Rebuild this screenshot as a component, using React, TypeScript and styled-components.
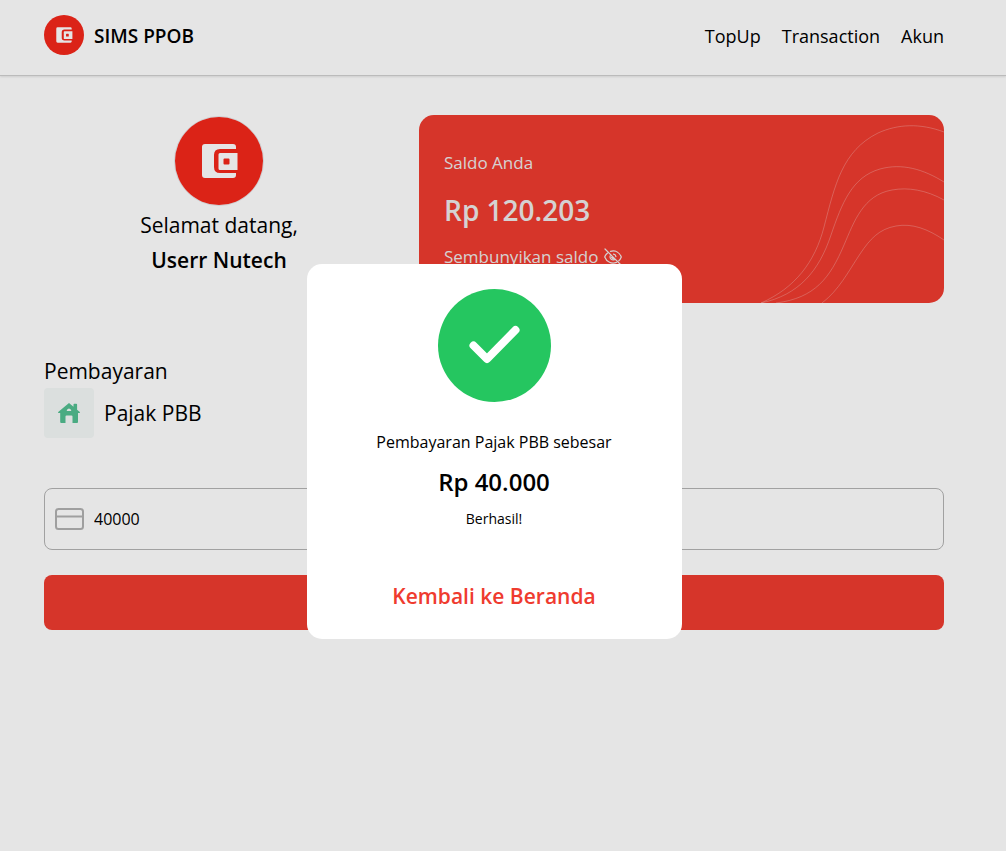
import React from "react";
import styled, { createGlobalStyle } from "styled-components";

const red = "#ef3b2f";

const GlobalStyle = createGlobalStyle`
  *, *::before, *::after { box-sizing: border-box; }
  body {
    margin: 0;
    background: #fff;
    color: #000;
    font-family: "Segoe UI", "Open Sans", "Noto Sans", sans-serif;
    font-size: 17px;
    font-weight: 400;
  }
  h1, h2, p { margin: 0; }
  a { color: inherit; text-decoration: none; }
  button, input { font: inherit; }
`;

const Page = styled.div`
  min-height: 100vh;
`;

const Header = styled.header`
  display: flex;
  align-items: center;
  justify-content: space-between;
  padding: 15px 62px 20px 44px;
  border-bottom: 1px solid #d1d1d1;
  box-shadow: 0 1px 2px rgba(0, 0, 0, 0.1);
`;

const Brand = styled.a`
  display: flex;
  align-items: center;
  gap: 10px;
  font-size: 19px;
  font-weight: 600;
`;

const BrandName = styled.span`
  padding-top: 2px;
`;

const Nav = styled.nav`
  display: flex;
  gap: 21px;
  padding-top: 2px;
  font-size: 18px;
`;

const Main = styled.main`
  padding: 39px 62px 40px 44px;
`;

const Summary = styled.section`
  display: grid;
  grid-template-columns: 2fr 3fr;
  gap: 25px;
`;

const Profile = styled.div`
  display: flex;
  flex-direction: column;
  align-items: center;
  padding-top: 1px;
`;

const Avatar = styled.div`
  display: flex;
  border: 1px solid #e5e7eb;
  border-radius: 50%;
`;

const Greeting = styled.p<{ $strong?: boolean }>`
  font-size: 21px;
  line-height: ${(p) => (p.$strong ? 32 : 38)}px;
  font-weight: ${(p) => (p.$strong ? 600 : 400)};
`;

const Balance = styled.div`
  position: relative;
  min-height: 188px;
  padding: 34px 25px 0;
  overflow: hidden;
  border-radius: 15px;
  background: ${red};
  color: #eeeaea;
`;

const Waves = styled.svg`
  position: absolute;
  right: 0;
  bottom: 0;
`;

const BalanceLabel = styled.p`
  line-height: 28px;
`;

const Amount = styled.p`
  padding: 11px 0 13px;
  font-size: 28px;
  line-height: 44px;
  font-weight: 600;
`;

const Toggle = styled.button`
  display: flex;
  align-items: center;
  gap: 6px;
  padding: 0;
  border: 0;
  background: none;
  color: inherit;
  line-height: 24px;
`;

const Payment = styled.form`
  padding-top: 52px;
`;

const SectionTitle = styled.h1`
  font-size: 21px;
  line-height: 33px;
  font-weight: 400;
`;

const Service = styled.div`
  display: flex;
  align-items: center;
  gap: 10px;
  margin-bottom: 50px;
`;

const ServiceIcon = styled.div`
  display: flex;
  align-items: center;
  justify-content: center;
  width: 50px;
  height: 50px;
  border-radius: 4px;
  background: #f4f9f8;
`;

const ServiceName = styled.h2`
  font-size: 21px;
  font-weight: 400;
`;

const Field = styled.label`
  display: flex;
  align-items: center;
  gap: 10px;
  height: 62px;
  margin-bottom: 25px;
  padding: 0 10px;
  border: 1px solid #b4b4b4;
  border-radius: 8px;
`;

const AmountInput = styled.input`
  flex: 1;
  min-width: 0;
  padding: 0;
  border: 0;
  outline: 0;
  background: transparent;
  color: #000;
  font-size: 16px;
`;

const PayButton = styled.button`
  width: 100%;
  height: 55px;
  border: 0;
  border-radius: 8px;
  background: ${red};
  color: #fff;
`;

const Overlay = styled.div`
  position: fixed;
  inset: 0;
  display: flex;
  align-items: center;
  justify-content: center;
  padding: 51px 18px 0 0;
  background: rgba(0, 0, 0, 0.1);
`;

const Dialog = styled.div`
  display: flex;
  flex-direction: column;
  align-items: center;
  width: 375px;
  padding: 25px 20px 26px;
  border-radius: 15px;
  background: #fff;
`;

const Message = styled.p`
  margin-top: 25px;
  font-size: 16px;
  line-height: 30px;
`;

const PaidAmount = styled.p`
  margin: 6px 0;
  font-size: 24px;
  line-height: 38px;
  font-weight: 600;
`;

const Status = styled.p`
  font-size: 14px;
  line-height: 24px;
`;

const HomeLink = styled.a`
  margin-top: 48px;
  color: ${red};
  font-size: 21px;
  line-height: 34px;
  font-weight: 600;
`;

const Logo = ({ size }: { size: number }) => (
  <svg width={size} height={size} viewBox="0 0 88 88" aria-hidden="true">
    <circle cx="44" cy="44" r="44" fill="#f4271a" />
    <path
      d="M30 27h28q3 0 3 3v2H45q-6 0-6 6v12q0 6 6 6h16v2q0 3-3 3H30q-3 0-3-3V30q0-3 3-3z"
      fill="#fff"
    />
    <path
      d="M45 36h17.500v17H45q-1.500 0-1.500-1.500v-14q0-1.500 1.500-1.500zM49.500 41.500q-1 0-1 1v4q0 1 1 1h4q1 0 1-1v-4q0-1-1-1z"
      fill="#fff"
      fillRule="evenodd"
    />
  </svg>
);

const EyeOff = () => (
  <svg
    width="18"
    height="18"
    viewBox="0 0 18 18"
    fill="none"
    stroke="currentColor"
    strokeWidth="1.200"
    strokeLinecap="round"
    aria-hidden="true"
  >
    <path d="M1 1l16 16" />
    <path d="M6.500 3.300C11.500 1.900 15.600 4.600 17.300 9c-.6 1.600-1.400 2.900-2.500 3.800" />
    <path d="M3.600 5C2.300 6 1.300 7.300.7 9c1.900 5 7 7.400 11.800 5.400" />
    <path d="M6.300 7.700c-1.100 2.700 1.500 5 4.200 3.900M9.500 6.200c1.300.2 2.200 1.100 2.400 2.400" />
    <path d="M8 9.500l1.300 1.100" strokeWidth="2" />
  </svg>
);

const House = () => (
  <svg width="22" height="20" viewBox="0 0 22 20" fill="#53bf91" fillRule="evenodd" aria-hidden="true">
    <path d="M11 0l4.500 3.700V1.500q0-.8.800-.8h2q.8 0 .8.800v5.200l2.700 2.300q.4 1-.6 1H20v9q0 1-1 1h-4.500v-6.500q0-1-1-1h-5q-1 0-1 1V20H3.200q-1 0-1-1v-9H.8q-1 0-.6-1zM11 5.500Q9 5.700 8.600 8h4.800Q13 5.700 11 5.500z" />
  </svg>
);

const Card = () => (
  <svg width="29" height="22" viewBox="0 0 29 22" fill="none" stroke="#b2b2b2" strokeWidth="2" aria-hidden="true">
    <rect x="1" y="1" width="27" height="20" rx="2.500" />
    <path d="M1 8.500h27" />
  </svg>
);

const Check = () => (
  <svg width="113" height="113" viewBox="0 0 113 113" aria-hidden="true">
    <circle cx="56.500" cy="56.500" r="56.500" fill="#25c660" />
    <path
      d="M35.500 56.500l13.500 13.500L77.500 41"
      fill="none"
      stroke="#fff"
      strokeWidth="8"
      strokeLinecap="round"
      strokeLinejoin="round"
    />
  </svg>
);

export default function App() {
  return (
    <Page>
      <GlobalStyle />
      <Header>
        <Brand href="#home">
          <Logo size={40} />
          <BrandName>SIMS PPOB</BrandName>
        </Brand>
        <Nav>
          <a href="#topup">TopUp</a>
          <a href="#transaction">Transaction</a>
          <a href="#akun">Akun</a>
        </Nav>
      </Header>
      <Main>
        <Summary>
          <Profile>
            <Avatar>
              <Logo size={88} />
            </Avatar>
            <Greeting>Selamat datang,</Greeting>
            <Greeting $strong>Userr Nutech</Greeting>
          </Profile>
          <Balance>
            <Waves
              width="184"
              height="188"
              viewBox="0 0 184 188"
              fill="none"
              stroke="#fff"
              strokeOpacity="0.25"
              aria-hidden="true"
            >
              <path d="M1 188C35 173 55 147 64 112C75 70 82 36 118 18C138 9 160 8 184 17" />
              <path d="M1 188C39 180 59 156 71 120C82 88 92 62 120 54C142 48 163 54 184 67" />
              <path d="M16 188C55 183 70 163 84 130C94 107 103 80 132 75C148 72 166 75 184 85" />
              <path d="M62 188C79 175 88 157 100 139C110 124 119 114 136 111C152 108 168 114 184 125" />
            </Waves>
            <BalanceLabel>Saldo Anda</BalanceLabel>
            <Amount>Rp 120.203</Amount>
            <Toggle type="button">
              Sembunyikan saldo
              <EyeOff />
            </Toggle>
          </Balance>
        </Summary>
        <Payment>
          <SectionTitle>Pembayaran</SectionTitle>
          <Service>
            <ServiceIcon>
              <House />
            </ServiceIcon>
            <ServiceName>Pajak PBB</ServiceName>
          </Service>
          <Field>
            <Card />
            <AmountInput aria-label="Nominal" defaultValue="40000" />
          </Field>
          <PayButton type="submit" aria-label="Bayar" />
        </Payment>
      </Main>
      <Overlay>
        <Dialog role="dialog" aria-modal="true" aria-label="Pembayaran berhasil">
          <Check />
          <Message>Pembayaran Pajak PBB sebesar</Message>
          <PaidAmount>Rp 40.000</PaidAmount>
          <Status>Berhasil!</Status>
          <HomeLink href="#home">Kembali ke Beranda</HomeLink>
        </Dialog>
      </Overlay>
    </Page>
  );
}
